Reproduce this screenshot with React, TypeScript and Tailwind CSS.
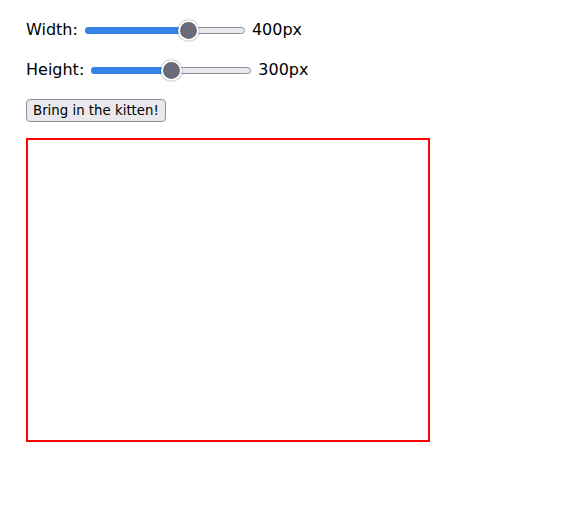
const MAX = 600;

function Slider({ value }: { value: number }) {
  // thumb centre travels from 10px to 150px along a 160px track
  const center = 10 + (value / MAX) * 140;
  return (
    <div className="relative flex h-5 w-[160px] items-center">
      <div className="h-[7px] w-full rounded-full border border-[#8f8f9d] bg-[#e9e9ed]" />
      <div
        className="absolute left-0 h-[7px] rounded-full bg-[#3584e4]"
        style={{ width: center }}
      />
      <div
        className="absolute top-[0px] size-[21px] rounded-full border-2 border-white bg-[#6a6a78] shadow-[0_0_1.5px_rgba(0,0,0,0.6)]"
        style={{ left: center - 10.5 }}
      />
    </div>
  );
}

export default function App() {
  const width = 400;
  const height = 300;

  return (
    <div className="min-h-screen bg-white px-[26px] pt-[20px] font-['DejaVu_Sans',sans-serif] text-base text-black">
      {/* Sliders */}
      <div className="flex h-5 items-center">
        <span>Width:</span>
        <div className="ml-[7px] mr-[7px]">
          <Slider value={width} />
        </div>
        <span>{width}px</span>
      </div>
      <div className="mt-5 flex h-5 items-center">
        <span>Height:</span>
        <div className="ml-[7px] mr-[7px]">
          <Slider value={height} />
        </div>
        <span>{height}px</span>
      </div>

      <button className="mt-[19px] rounded-[4px] border border-[#8f8f9d] bg-[#e9e9ed] px-[6px] py-[1px] text-[13.33px] leading-[19px]">
        Bring in the kitten!
      </button>

      {/* Kitten frame */}
      <div
        className="mt-4 border-2 border-[#ff0000]"
        style={{ width: width + 4, height: height + 4 }}
      />
    </div>
  );
}
